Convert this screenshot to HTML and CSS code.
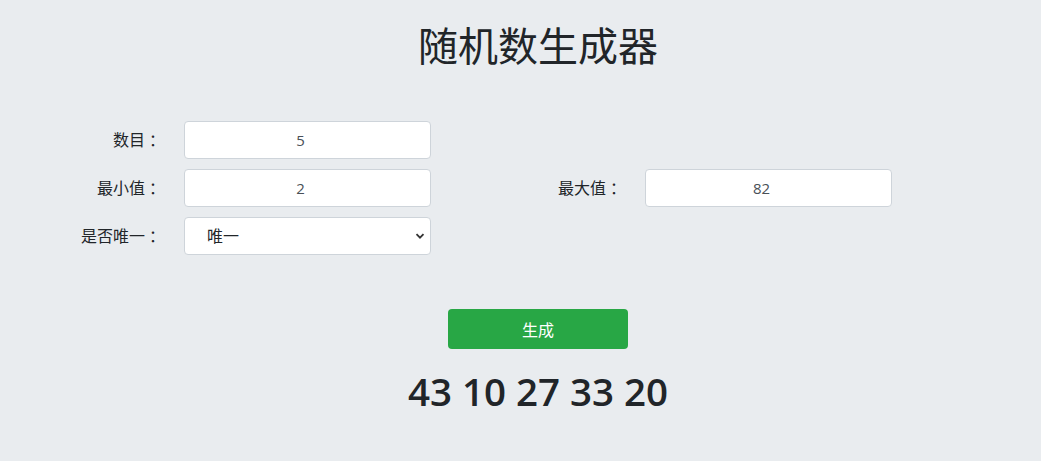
FILE: index.html
```html
<!DOCTYPE html>
<html lang="zh-CN">
<head>
  <meta charset="UTF-8" />
  <meta name="viewport" content="width=device-width, initial-scale=1.0"/>
  <title>随机数生成器</title>
  <link rel="stylesheet" href="styles.css">
</head>
<body>
  <div class="page">
    <h1 class="titulo">随机数生成器</h1>

    <form class="gen-form" id="genForm">
      <div class="linha">
        <div class="campo">
          <label class="rotulo" for="count">数目<span class="dois-pontos">：</span></label>
          <input class="entrada" type="text" id="count" value="5" />
        </div>
      </div>
      <div class="linha">
        <div class="campo">
          <label class="rotulo" for="min">最小值<span class="dois-pontos">：</span></label>
          <input class="entrada" type="text" id="min" value="2" />
        </div>
        <div class="campo campo-direita">
          <label class="rotulo" for="max">最大值<span class="dois-pontos">：</span></label>
          <input class="entrada" type="text" id="max" value="82" />
        </div>
      </div>
      <div class="linha">
        <div class="campo">
          <label class="rotulo" for="unique">是否唯一<span class="dois-pontos">：</span></label>
          <div class="select-wrap">
            <select class="entrada seletor" id="unique">
              <option>唯一</option>
              <option>不唯一</option>
            </select>
            <svg class="seta" width="10" height="10" viewBox="0 0 10 10">
              <path d="M1.5 3.2 L5 6.7 L8.5 3.2" fill="none" stroke="#333" stroke-width="1.8"/>
            </svg>
          </div>
        </div>
      </div>

      <div class="acoes">
        <button type="submit" class="botao">生成</button>
      </div>
    </form>

    <div class="resultado" id="resultado">43 10 27 33 20</div>
  </div>
</body>
</html>
```

FILE: styles.css
```css
body {
  margin: 0;
  font-family: "Open Sans", "Noto Sans CJK SC", sans-serif;
  background: #e9ecef;
  color: #212529;
}
.page {
  padding-left: 35px;
}
.titulo {
  margin: 22px 0 51px;
  font-size: 40px;
  font-weight: 400;
  line-height: 48px;
  text-align: center;
}
.gen-form {
  margin-left: -35px;
  display: flex;
  flex-direction: column;
  gap: 10px;
}
.linha {
  display: flex;
  align-items: center;
  height: 38px;
}
.campo {
  display: flex;
  align-items: center;
}
.campo-direita {
  margin-left: 30px;
}
.rotulo {
  width: 165px;
  margin-right: 19px;
  text-align: right;
  font-size: 16px;
  line-height: 24px;
}
.dois-pontos {
  padding-left: 4px;
}
.entrada {
  box-sizing: border-box;
  width: 247px;
  height: 38px;
  padding: 6px 26px 6px 12px;
  border: 1px solid #ced4da;
  border-radius: 4px;
  background: white;
  font-family: inherit;
  font-size: 15px;
  color: #495057;
  text-align: center;
}
.select-wrap {
  position: relative;
}
.seletor {
  appearance: none;
  -webkit-appearance: none;
  text-align: left;
  padding-left: 22px;
  font-size: 16px;
  color: #212529;
}
.seta {
  position: absolute;
  right: 6px;
  top: 14px;
  pointer-events: none;
}
.acoes {
  margin-top: 44px;
  margin-left: 35px;
  display: flex;
  justify-content: center;
}
.botao {
  width: 180px;
  height: 40px;
  border: none;
  border-radius: 4px;
  background: #28a745;
  color: white;
  font-family: inherit;
  font-size: 16px;
  cursor: pointer;
}
.resultado {
  margin-top: 19px;
  text-align: center;
  font-size: 38.5px;
  font-weight: 600;
  line-height: 46px;
}
```
